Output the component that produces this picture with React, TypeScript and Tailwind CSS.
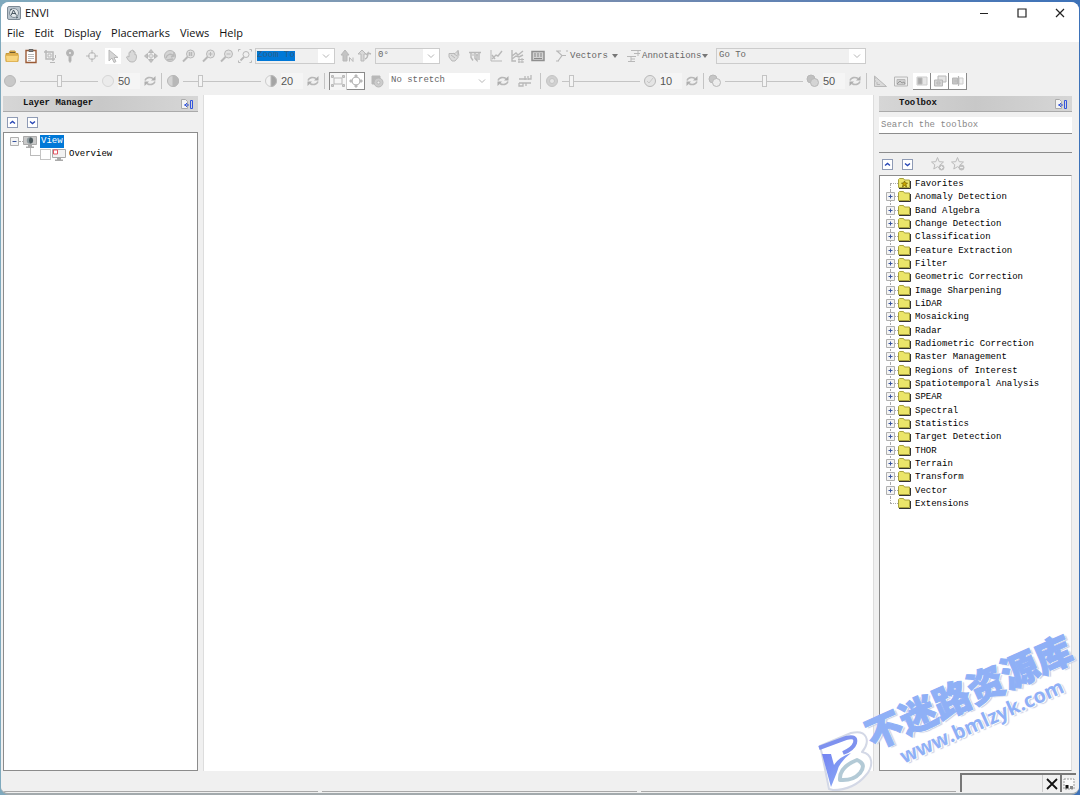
import type { ReactNode } from 'react'
import clsx from 'clsx'

const MONO = "font-['Liberation_Mono','Noto_Sans_CJK_SC',monospace] text-[9px]"
const UI = "font-['Open_Sans','Noto_Sans',sans-serif] text-[11px]"

const menus = ['File', 'Edit', 'Display', 'Placemarks', 'Views', 'Help']

const tools = [
  'Favorites',
  'Anomaly Detection',
  'Band Algebra',
  'Change Detection',
  'Classification',
  'Feature Extraction',
  'Filter',
  'Geometric Correction',
  'Image Sharpening',
  'LiDAR',
  'Mosaicking',
  'Radar',
  'Radiometric Correction',
  'Raster Management',
  'Regions of Interest',
  'Spatiotemporal Analysis',
  'SPEAR',
  'Spectral',
  'Statistics',
  'Target Detection',
  'THOR',
  'Terrain',
  'Transform',
  'Vector',
  'Extensions',
]

const magnifier = (
  <>
    <circle cx="9.5" cy="6" r="4" fill="#e2e2e2" />
    <path d="M6.5 9 2 13.5" strokeWidth="2" />
  </>
)

const glyphs: Record<string, ReactNode> = {
  open: (
    <>
      <path d="M2 5.5h3l1-2.5h5l1 2.5h2v8H2z" fill="#e0b04c" stroke="#c79a3c" />
      <path d="M6 4.5h5" stroke="#6d5a30" />
      <path d="M1.500 7.500h13l-1 6h-11z" fill="#f8d57e" stroke="#e0b457" />
    </>
  ),
  clipboard: (
    <>
      <path d="M3 2.500h10v12H3z" fill="#fff" stroke="#9a5a35" strokeWidth="1.400" />
      <path d="M6 1.500h4v2H6z" fill="#888" stroke="#666" />
      <path d="M5 6.500h6M5 8.500h6M5 10.500h6M5 12.500h3" stroke="#bbb" />
    </>
  ),
  crop: (
    <>
      <path d="M4 2v9h9M2 4h9v9" strokeWidth="1.500" />
      <path d="M6 6h3v3H6zM13.500 7v3M8 14.500h5" />
    </>
  ),
  pin: (
    <>
      <circle cx="8" cy="5" r="3.500" fill="#b4b4b4" />
      <circle cx="8" cy="5" r="1" fill="#eee" stroke="none" />
      <path d="M7 9h2v4l-1 1.500-1-1.500z" fill="#aaa" />
    </>
  ),
  crosshair: (
    <>
      <circle cx="8" cy="8" r="3.500" />
      <path d="M8 2v4M8 10v4M2 8h4M10 8h4" />
    </>
  ),
  pointer: <path d="M4 2v11l3-3 2 4.500 2-1-2-4h4z" fill="#d6d6d6" />,
  hand: (
    <path
      d="M5 9V4.500q1-1 1.500 0V3q1-1 1.500 0v-.5q1-1 1.500 0V4q1-1 1.500 0v3q1.500-1 1.500.5c0 4-1 6.500-4.500 6.500-3 0-4-2-5.500-5q1-1.500 2.500 0z"
      fill="#d9d9d9"
    />
  ),
  move: (
    <>
      <path d="M8 1.500 10.500 4.500h-5zM8 14.500 5.500 11.500h5zM1.500 8l3-2.500v5zM14.500 8l-3 2.500v-5z" fill="#c0c0c0" />
      <path d="M8 5.500 10.500 8 8 10.500 5.500 8z" fill="#e0e0e0" />
    </>
  ),
  rotate: (
    <>
      <circle cx="8" cy="8" r="5.500" fill="#d4d4d4" />
      <path d="M4 10c1-4 5-5 8-2l-3 1M12 8V4M5 12l6-1" strokeWidth="1.400" />
    </>
  ),
  zoom: (
    <>
      {magnifier}
      <path d="M7.500 5h4M7.500 7h4M8.500 4v4M10.500 4v4" />
    </>
  ),
  zoomIn: (
    <>
      {magnifier}
      <path d="M7.500 6h4M9.500 4v4" />
    </>
  ),
  zoomOut: (
    <>
      {magnifier}
      <path d="M7.500 6h4" />
    </>
  ),
  zoomFit: (
    <>
      <circle cx="9" cy="6.500" r="3" />
      <path d="M7 9 3.500 12.500" strokeWidth="1.800" />
      <path d="M1.500 3.500v-2h2M12.500 1.500h2v2M14.500 12.500v2h-2M1.500 12.500v2h2" />
    </>
  ),
  northUp: (
    <>
      <path d="M6 2 10 7H8v6H4V7H2z" fill="#c4c4c4" />
      <path d="M10.500 13.500v-4l3.500 4v-4" />
    </>
  ),
  rotateTo: (
    <>
      <path d="M5 2 9 6H7v7H4V6H1z" fill="#d8d8d8" />
      <path d="M8 11q3-1 3-6l-2 2M11 5l3 1" strokeWidth="1.400" />
    </>
  ),
  cursorValue: (
    <>
      <path d="M3 5.500h6l3-3v7L9 13H6L3 9z" fill="#dcdcdc" />
      <path d="m5 7 4 3M7 5l4 3M12 2.500l1 5" />
    </>
  ),
  measure: (
    <>
      <path d="M2 4.500h12M4 4.500v5l2 3M8 4.500v6l2 2V6M12 4.500V12" strokeWidth="1.400" />
      <path d="M5 7h2M9 7h2" />
    </>
  ),
  profile: (
    <>
      <path d="M3 2v11h11" />
      <path d="m4 11 4-4 2 1 4-5M4 7l3 4" strokeWidth="1.400" />
    </>
  ),
  spectral: (
    <>
      <path d="M3 2v11h4M14 3 9 7 7 5 3 8M3 11l4-3 3 1 4-2" strokeWidth="1.400" />
      <path d="M9 11.500h6M9 14h6M10 10v5M13 10v5" />
    </>
  ),
  chip: (
    <>
      <path d="M2 3.500h12v9H2z" fill="#d2d2d2" stroke="#8f8f8f" strokeWidth="1.500" />
      <path d="M5 5v4M8 5v4M11 5v4M4 10.500h8" stroke="#888" />
    </>
  ),
  vectors: <path d="M2 3h5M3 3l5 4.500L4 13M8 7.500h4M12 3h2M2 13h3" strokeWidth="1.200" />,
  annotations: (
    <>
      <path d="M5 2.500h10M8 5.500h6M1 8.500h9M5 11h4M2 13.500h7M12 3v5M5 9v4" />
    </>
  ),
  discDark: <circle cx="8" cy="8" r="5.500" fill="#c8c8c8" />,
  discLight: <circle cx="8" cy="8" r="5.500" fill="#ebebeb" stroke="#d6d6d6" />,
  halfLow: (
    <>
      <circle cx="8" cy="8" r="5.500" fill="#d4d4d4" />
      <path d="M8 2.500a5.500 5.500 0 0 1 0 11z" fill="#b8b8b8" />
    </>
  ),
  halfHigh: (
    <>
      <circle cx="8" cy="8" r="5.500" fill="#f2f2f2" stroke="#ccc" />
      <path d="M8 2.500a5.500 5.500 0 0 1 0 11z" fill="#a4a4a4" />
    </>
  ),
  blur: (
    <>
      <circle cx="8" cy="8" r="5.500" fill="#d0d0d0" stroke="#c4c4c4" />
      <circle cx="8" cy="8" r="2.500" fill="#e6e6e6" stroke="#c4c4c4" />
    </>
  ),
  sharp: (
    <>
      <circle cx="8" cy="8" r="5.500" fill="#e4e4e4" />
      <path d="m5 8 2 2 4-5" stroke="#c8c8c8" />
    </>
  ),
  overlap: (
    <>
      <circle cx="6" cy="6" r="4" fill="#c6c6c6" />
      <circle cx="9.500" cy="9.500" r="4" fill="#ededed" />
    </>
  ),
  overlapDark: (
    <>
      <circle cx="6" cy="6" r="4" fill="#c0c0c0" />
      <circle cx="9.500" cy="9.500" r="4" fill="#d4d4d4" />
    </>
  ),
  refresh: (
    <>
      <path d="M3 7.500C4 4.500 8 3.500 11 5.500M13 8.500c-1 3-5 4-8 2" strokeWidth="1.600" />
      <path d="M13.500 3v4.500H9zM2.500 13V8.500H7z" fill="#adadad" stroke="none" />
    </>
  ),
  extent: (
    <>
      <path d="M4 5h8v6H4z" />
      <path d="M1.500 2.500h2v2h-2zM12.500 2.500h2v2h-2zM1.500 11.500h2v2h-2zM12.500 11.500h2v2h-2z" fill="#ccc" />
    </>
  ),
  extentRound: (
    <>
      <circle cx="8" cy="8" r="4" />
      <path d="M7 2h2v2H7zM7 12h2v2H7zM2 7h2v2H2zM12 7h2v2h-2z" fill="#bbb" />
    </>
  ),
  stretch: (
    <>
      <path d="M3 3h8v3H7v5H3z" fill="#b8b8b8" />
      <circle cx="9.500" cy="9.500" r="4.500" fill="#ccc" />
      <circle cx="9.500" cy="9.500" r="1.500" fill="#eee" />
    </>
  ),
  swap: <path d="M2 6h8M8 3v4M11 3v4M14 2v4h-3M2 10h12M2 10v3h4v-3M9 10v3" strokeWidth="1.300" />,
  ruler: (
    <>
      <path d="M2.500 3v10.500h12z" fill="#dadada" />
      <path d="M5 9v2.500h3M2.500 5h1.500M2.500 8h1.500" />
    </>
  ),
  picture: (
    <>
      <path d="M1.500 4h13v9h-13z" fill="#eee" />
      <path d="M4 6.500h8v5H4z" fill="#cfcfcf" />
      <path d="m4 11 3-3 2 2 2-1 1 2" stroke="#999" />
    </>
  ),
  blend: (
    <>
      <path d="M3 4h10v8H3z" fill="#e6e6e6" stroke="#ccc" />
      <path d="M4 5h4v6H4z" fill="#aaa" />
    </>
  ),
  flicker: (
    <>
      <path d="M6 3h8v6H6z" fill="#e4e4e4" />
      <path d="M2.500 7h8v6h-8z" fill="#d4d4d4" />
      <path d="M5 9h3v2H5z" />
    </>
  ),
  swipe: (
    <>
      <path d="M2.500 5h5v6h-5z" fill="#c4c4c4" />
      <path d="M9 5h4v6H9z" fill="#eee" stroke="#ccc" />
      <path d="M8.500 3v10M4.500 8h3" strokeWidth="1.200" />
    </>
  ),
}

function Glyph({ name }: { name: string }) {
  return (
    <svg viewBox="0 0 16 16" className="size-4 shrink-0" fill="none" stroke="#b8b8b8" strokeWidth="1">
      {glyphs[name]}
    </svg>
  )
}

function ToolButton({ name, className }: { name: string; className?: string }) {
  return (
    <button type="button" aria-label={name} className={clsx('flex shrink-0', className)}>
      <Glyph name={name} />
    </button>
  )
}

function ToolGroup({ names, className }: { names: string[]; className: string }) {
  return (
    <div className={clsx('flex', className)}>
      {names.map((n) => (
        <ToolButton key={n} name={n} className={n === 'pointer' ? 'bg-white' : ''} />
      ))}
    </div>
  )
}

function Chevron() {
  return (
    <svg viewBox="0 0 8 8" className="size-2" fill="none" stroke="#b5b5b5">
      <path d="m1 2.500 3 3 3-3" />
    </svg>
  )
}

function Combo({ label, value, className }: { label: string; value: string; className: string }) {
  return (
    <div className={clsx('relative h-4 shrink-0', className)}>
      <select
        aria-label={label}
        className={clsx(MONO, 'block size-full appearance-none bg-transparent px-0.5 text-[#666] outline-none')}
      >
        <option>{value}</option>
      </select>
      <span className="pointer-events-none absolute inset-y-0 right-0 flex w-4 items-center justify-center bg-white">
        <Chevron />
      </span>
    </div>
  )
}

function Adjust({ label, value, position, icons }: { label: string; value: string; position: number; icons: [string, string] }) {
  return (
    <div className="flex shrink-0 items-center gap-0.5">
      <ToolButton name={icons[0]} />
      <input
        type="range"
        aria-label={label}
        defaultValue={position}
        className="h-4 w-[78px] appearance-none bg-transparent [&::-webkit-slider-runnable-track]:h-px [&::-webkit-slider-runnable-track]:bg-[#c4c4c4] [&::-webkit-slider-thumb]:-mt-1.5 [&::-webkit-slider-thumb]:h-3 [&::-webkit-slider-thumb]:w-[5px] [&::-webkit-slider-thumb]:appearance-none [&::-webkit-slider-thumb]:border [&::-webkit-slider-thumb]:border-[#c4c4c4] [&::-webkit-slider-thumb]:bg-[#f4f4f4]"
      />
      <ToolButton name={icons[1]} />
      <input
        aria-label={`${label} value`}
        defaultValue={value}
        className="h-4 w-[22px] bg-[#f5f5f5] pt-px font-['Liberation_Sans',sans-serif] text-[11px] text-[#555] outline-none"
      />
      <ToolButton name="refresh" />
    </div>
  )
}

function Divider() {
  return <span className="mx-[3px] h-4 w-px shrink-0 bg-[#c4c4c4]" />
}

function DropButton({ icon, label, className }: { icon: string; label: string; className: string }) {
  return (
    <button type="button" className={clsx(MONO, 'ml-2 flex shrink-0 items-center text-[#666]', className)}>
      <Glyph name={icon} />
      <span className="pt-0.5">{label}</span>
      <span className="ml-auto border-x-[3px] border-t-4 border-x-transparent border-t-[#777]" />
    </button>
  )
}

function PanelHeader({ title }: { title: string }) {
  return (
    <header className="flex h-4 items-center justify-between border-b border-[#aaa] bg-linear-to-r from-[#d6d6d6] via-[#c8c8c8] to-[#d6d6d6] pr-1 pl-5">
      <h2 className={clsx(MONO, 'pt-px font-bold text-[#111]')}>{title}</h2>
      <button type="button" aria-label="Undock">
        <svg viewBox="0 0 14 14" className="size-3.5" fill="none">
          <path d="M1.500 2.500h4l2 2v7h-6z" fill="#f4f4f4" stroke="#aaa" />
          <path d="M4 8h5M7 6 5 8l2 2M10.500 3.500h2v8h-2z" stroke="#3355dd" />
        </svg>
      </button>
    </header>
  )
}

function ArrowButton({ up }: { up?: boolean }) {
  return (
    <button
      type="button"
      aria-label={up ? 'Collapse all' : 'Expand all'}
      className="flex size-[11px] items-center justify-center border border-[#8f9bb5] bg-white"
    >
      <svg viewBox="0 0 7 7" className="size-[7px]" fill="none" stroke="#2746b5" strokeWidth="1.400">
        <path d={up ? 'm1 4.500 2.500-2 2.500 2' : 'm1 2.500 2.500 2 2.500-2'} />
      </svg>
    </button>
  )
}

function Star({ sign }: { sign: string }) {
  return (
    <button type="button" aria-label={sign === '+' ? 'Add favorite' : 'Remove favorite'}>
      <svg viewBox="0 0 16 16" className="size-4" fill="#eee" stroke="#bcbcbc">
        <path d="m7.500 1.500 1.700 4.200 4.300.3-3.300 2.800 1 4.200-3.700-2.300L3.800 13l1-4.200L1.500 6l4.300-.3z" />
        <circle cx="11.500" cy="11.500" r="2.500" fill="#c4c4c4" />
        <path d={sign === '+' ? 'M10 11.500h3M11.500 10v3' : 'M10 11.500h3'} stroke="#eee" />
      </svg>
    </button>
  )
}

function Expander({ open }: { open?: boolean }) {
  return (
    <svg viewBox="0 0 9 9" className="size-[9px] shrink-0" fill="none">
      <path d="M.5.5h8v8h-8z" fill="#f4f4f4" stroke="#b0b0b0" />
      <path d={open ? 'M2.500 4.500h4' : 'M2.500 4.500h4M4.500 2.500v4'} stroke="#3a569e" />
    </svg>
  )
}

function Folder({ favorite }: { favorite?: boolean }) {
  return (
    <svg viewBox="0 0 13 11" className="h-[11px] w-[13px] shrink-0">
      <path d="M.5 9.500v-8l1-1h4l1 1.500h5v7.500z" fill="#ebe56a" stroke="#a8a23c" />
      <path d="M1 10.500h11.500V3" fill="none" stroke="#333" />
      {favorite && <path d="m6.500 3 1 2h2L8 6.500 8.500 9l-2-1.500-2 1.500.5-2.500L3.500 5h2z" fill="#c9a800" stroke="#6f5d00" strokeWidth=".7" />}
    </svg>
  )
}

function ToolRow({ name, first, last }: { name: string; first: boolean; last: boolean }) {
  const leaf = first || last
  return (
    <li className="flex items-center">
      <span className="relative flex w-[18px] shrink-0 items-center self-stretch pl-1.5">
        <span
          className={clsx(
            'absolute left-2.5 border-l border-dotted border-[#aaa]',
            first ? 'top-1/2 bottom-0' : last ? 'top-0 bottom-1/2' : 'inset-y-0',
          )}
        />
        <span className="absolute right-0 left-2.5 border-t border-dotted border-[#aaa]" />
        {!leaf && (
          <button type="button" aria-label={`Expand ${name}`} className="relative">
            <Expander />
          </button>
        )}
      </span>
      <Folder favorite={first} />
      <span className="ml-1 pt-px whitespace-nowrap">{name}</span>
    </li>
  )
}

function MonitorIcon({ overview }: { overview?: boolean }) {
  return (
    <svg viewBox="0 0 14 12" className="h-3 w-3.5 shrink-0" fill="none">
      <path d="M.5.5h13v8H.5z" fill={overview ? '#f2f2f2' : '#c9c9c9'} stroke="#aaa" />
      <path d="M5 9h4v1.500h2V12H3v-1.500h2z" fill="#aaa" />
      {overview ? (
        <path d="M1.500 1h4v4h-4z" fill="#fff" stroke="#e25563" />
      ) : (
        <>
          <circle cx="7" cy="4.500" r="3.200" fill="#8e9a9e" />
          <path d="M7 1.500a3 3 0 0 1 0 6q-2-3 0-6" fill="#4e5a5e" />
        </>
      )}
    </svg>
  )
}

function LayerManager() {
  return (
    <aside className="flex w-[197px] shrink-0 flex-col pt-px pl-0.5">
      <PanelHeader title="Layer Manager" />
      <div className="flex h-5 items-center gap-[9px] pt-px pl-1">
        <ArrowButton up />
        <ArrowButton />
      </div>
      <ul className={clsx(MONO, 'flex-1 border border-[#8c8c8c] bg-white pt-0.5 pl-1.5 leading-[13px]')}>
        <li className="flex h-[13px] items-center">
          <Expander open />
          <span className="w-1 border-t border-dotted border-[#aaa]" />
          <MonitorIcon />
          <span className="ml-[3px] bg-[#0078d7] px-px text-white">View</span>
        </li>
        <li className="flex h-[13px] items-center pl-5">
          <span className="mb-1.5 h-2 w-2.5 border-b border-l border-[#bbb]" />
          <label className="flex items-center">
            <input type="checkbox" className="size-[11px] appearance-none border border-[#c4c4c4] bg-white" />
            <span className="ml-px">
              <MonitorIcon overview />
            </span>
            <span className="ml-[3px]">Overview</span>
          </label>
        </li>
      </ul>
    </aside>
  )
}

function Toolbox() {
  return (
    <aside className="flex w-[200px] shrink-0 flex-col pt-px pr-[7px]">
      <PanelHeader title="Toolbox" />
      <input
        type="search"
        aria-label="Search the toolbox"
        placeholder="Search the toolbox"
        className={clsx(MONO, 'mt-[5px] h-[17px] border-b border-[#8c8c8c] bg-white px-0.5 outline-none placeholder:text-[#888]')}
      />
      <div className="h-[19px] border-b border-[#8c8c8c]" />
      <div className="flex h-[22px] items-center gap-[9px] pl-[3px]">
        <ArrowButton up />
        <ArrowButton />
        <div className="ml-2 flex gap-1">
          <Star sign="+" />
          <Star sign="-" />
        </div>
      </div>
      <div className="flex-1 border border-r-[#ddd] border-[#8c8c8c] bg-white pt-px">
        <ul className={clsx(MONO, 'grid h-[333px] auto-rows-fr leading-[12px] text-black')}>
          {tools.map((name, i) => (
            <ToolRow key={name} name={name} first={i === 0} last={i === tools.length - 1} />
          ))}
        </ul>
      </div>
    </aside>
  )
}

function TitleBar() {
  return (
    <div className={clsx(UI, 'flex h-[22px] shrink-0 items-center bg-white pl-1.5 text-[#111]')}>
      <svg viewBox="0 0 14 14" className="size-3.5" fill="none">
        <rect x=".5" y=".5" width="13" height="13" rx="1.500" fill="#b9c4cd" stroke="#7d8a95" />
        <circle cx="7" cy="7" r="4.500" fill="#e3e8eb" stroke="#7f8d97" />
        <path d="M4 9.500 6.500 4l3 5.500M5 7.500h4M3 4l2-1M11 11l-2 1" stroke="#4b5963" />
      </svg>
      <h1 className="ml-1">ENVI</h1>
      <div className="ml-auto flex text-[#222]">
        <button type="button" aria-label="Minimize" className="flex h-5 w-[38px] items-center justify-center">
          <svg viewBox="0 0 10 10" className="size-2.5" stroke="currentColor">
            <path d="M1 5.500h8" />
          </svg>
        </button>
        <button type="button" aria-label="Maximize" className="flex h-5 w-[38px] items-center justify-center">
          <svg viewBox="0 0 10 10" className="size-2.5" fill="none" stroke="currentColor" strokeWidth="1.200">
            <path d="M1 1h8v8H1z" />
          </svg>
        </button>
        <button type="button" aria-label="Close" className="flex h-5 w-[38px] items-center justify-center">
          <svg viewBox="0 0 10 10" className="size-2.5" stroke="currentColor" strokeWidth="1.200">
            <path d="m1 1 8 8M9 1 1 9" />
          </svg>
        </button>
      </div>
    </div>
  )
}

function Toolbars() {
  const raised = 'border-r border-b border-[#8a8a8a] bg-white pl-px'
  return (
    <div className="shrink-0 overflow-hidden bg-[#f0f0f0] pt-px pb-0.5">
      <div className="flex h-[25px] items-center pl-[3px]">
        <ToolGroup names={['open', 'clipboard', 'crop']} className="gap-[3px]" />
        <ToolGroup names={['pin', 'crosshair']} className="ml-1 gap-1.5" />
        <ToolGroup names={['pointer', 'hand', 'move', 'rotate', 'zoom']} className="ml-[5px] gap-[3px]" />
        <ToolGroup names={['zoomIn', 'zoomOut', 'zoomFit']} className="ml-1 gap-0.5" />
        <div className="ml-0.5 flex h-4 w-20 shrink-0 items-center border border-[#ccc] bg-[#f0f0f0] pl-px">
          <input
            aria-label="Zoom"
            defaultValue="Zoom To"
            className={clsx(MONO, 'h-2.5 w-[38px] bg-[#0078d7] text-[#2d5f8c] outline-none')}
          />
          <button type="button" aria-label="Zoom levels" className="ml-auto flex h-full w-4 items-center justify-center bg-white">
            <Chevron />
          </button>
        </div>
        <ToolGroup names={['northUp', 'rotateTo']} className="ml-1 gap-0.5" />
        <Combo label="Rotation" value="0°" className="ml-0.5 w-[65px] border border-[#ccc]" />
        <ToolGroup names={['cursorValue', 'measure', 'profile', 'spectral', 'chip']} className="ml-1.5 gap-[5px]" />
        <DropButton icon="vectors" label="Vectors" className="w-16" />
        <DropButton icon="annotations" label="Annotations" className="w-[82px]" />
        <Combo label="Go To" value="Go To" className="ml-2 w-[150px] border border-[#ccc]" />
      </div>
      <div className="flex h-[25px] items-center pt-px pl-px">
        <Adjust label="Brightness" value="50" position={50} icons={['discDark', 'discLight']} />
        <Divider />
        <Adjust label="Contrast" value="20" position={20} icons={['halfLow', 'halfHigh']} />
        <Divider />
        <div className="ml-px flex border-t border-l border-[#8a8a8a]">
          <ToolButton name="extent" className="border-r border-[#ccc] bg-[#f6f6f6]" />
          <ToolButton name="extentRound" className={raised} />
        </div>
        <ToolButton name="stretch" className="ml-1" />
        <Combo label="Stretch type" value="No stretch" className="ml-1 w-[101px] bg-white" />
        <ToolButton name="refresh" className="ml-[5px]" />
        <ToolButton name="swap" className="mr-1 ml-1.5" />
        <Divider />
        <Adjust label="Sharpen" value="10" position={10} icons={['blur', 'sharp']} />
        <Divider />
        <Adjust label="Transparency" value="50" position={50} icons={['overlap', 'overlapDark']} />
        <Divider />
        <ToolButton name="ruler" className="ml-0.5" />
        <ToolButton name="picture" className="ml-[5px]" />
        <div className="ml-1 flex">
          <ToolButton name="blend" className={raised} />
          <ToolButton name="flicker" className={raised} />
          <ToolButton name="swipe" className={raised} />
        </div>
      </div>
    </div>
  )
}

function StatusBar() {
  return (
    <footer className="flex h-[22px] shrink-0 items-stretch gap-1 bg-[#f0f0f0] pr-[3px] pl-0.5">
      <div className="mb-px flex-1 border-b border-[#a8a8a8]" />
      <div className="mb-px flex-1 border-b border-[#a8a8a8]" />
      <div className="mb-px flex-1 border-b border-[#a8a8a8]" />
      <div className="mt-0.5 mb-px flex w-[116px] justify-end border-t-2 border-l-2 border-[#777]">
        <button type="button" aria-label="Cancel" className="flex w-[18px] items-center justify-center border-l border-[#ccc]">
          <svg viewBox="0 0 12 12" className="size-3" stroke="#111" strokeWidth="1.800">
            <path d="m1 1 10 10M11 1 1 11" />
          </svg>
        </button>
        <button type="button" aria-label="Progress" className="flex w-4 items-center justify-center border-l-2 border-[#777]">
          <svg viewBox="0 0 12 12" className="size-3" fill="none">
            <path d="M1 1h10v10H1z" fill="#fafafa" stroke="#999" strokeDasharray="2 1" />
            <path d="M2.500 7h3v3.500h-3z" fill="#111" />
            <path d="M7 8h3v3H7z" fill="#888" />
          </svg>
        </button>
      </div>
    </footer>
  )
}

function Watermark() {
  return (
    <div className="pointer-events-none absolute inset-0 overflow-hidden">
      <svg viewBox="0 0 60 66" className="absolute right-[205px] bottom-[3px] h-[66px] w-[60px]" fill="none" strokeLinejoin="round" strokeLinecap="round">
        <defs>
          <linearGradient id="mark" x1="0" y1="0" x2="1" y2="1">
            <stop offset="0" stopColor="#7383f2" />
            <stop offset="1" stopColor="#8eb0f5" />
          </linearGradient>
        </defs>
        <path d="M5 20 36 7c16-4 20 8 11 19 11 2 12 14 4 23-9 11-22 15-33 15l-4-1L7 28z" fill="#fff" stroke="#d3d8e6" strokeWidth="2" />
        <path d="M4 22 31 12q11-3 9 5-2 6-12 10" stroke="#7f92ef" strokeWidth="4" strokeLinecap="butt" />
        <path d="M7 28h9l3 11q5-8 17-12-12 9-14 19l-6 15z" fill="url(#mark)" />
        <path d="M25 54q-1-13 17-20 10 4 3 13-7 8-20 7z" stroke="#b3cad6" strokeWidth="4" />
      </svg>
      <div className="absolute right-[-10px] bottom-[57px] flex h-[68px] w-[232px] -rotate-[24deg] flex-col items-center whitespace-nowrap text-[#8fb0f6] [text-shadow:1px_1px_0_#fff,2px_2px_1px_#c3cde6]">
        <span className="font-['Noto_Sans_CJK_SC',sans-serif] text-[37px] leading-[38px] font-black [-webkit-text-stroke:1px_#8fb0f6]">不迷路资源库</span>
        <span className="font-['Open_Sans',sans-serif] text-[20px] leading-[30px] font-bold">www.bmlzyk.com</span>
      </div>
    </div>
  )
}

export default function App() {
  return (
    <div className="relative h-screen overflow-hidden bg-linear-to-r from-[#7fa9bd] via-[#7d8fae] to-[#3d72b8] px-px pt-0.5">
      <div className="flex h-full flex-col overflow-hidden rounded-lg border-b-2 border-[#a3aaad] bg-[#f0f0f0]">
        <TitleBar />
        <nav className={clsx(UI, 'flex h-[18px] shrink-0 items-center gap-2.5 bg-white pl-1.5 text-[#111]')}>
          {menus.map((m) => (
            <button key={m} type="button">
              {m}
            </button>
          ))}
        </nav>
        <Toolbars />
        <div className="flex min-h-0 flex-1">
          <LayerManager />
          <main aria-label="View" className="mx-[5px] flex-1 border-x border-[#ddd] bg-white" />
          <Toolbox />
        </div>
        <StatusBar />
      </div>
      <Watermark />
    </div>
  )
}
